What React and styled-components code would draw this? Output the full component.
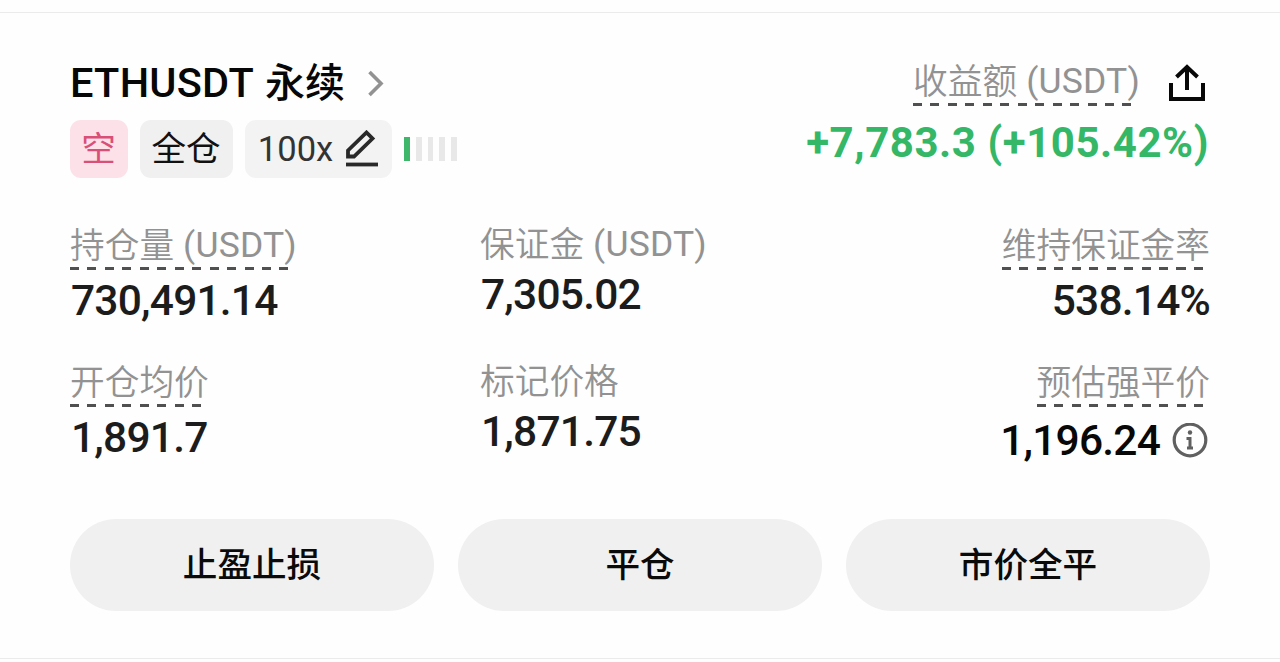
import React from "react";
import styled, { createGlobalStyle } from "styled-components";

const GlobalStyle = createGlobalStyle`
  * { box-sizing: border-box; }
  body {
    margin: 0;
    background: #fefefe;
    font-family: Roboto, "Noto Sans CJK SC", sans-serif;
    color: #1c1c1c;
  }
`;

const Page = styled.main`
  width: 1280px;
  height: 662px;
  padding-top: 12px;
  overflow: hidden;
`;

const Card = styled.section`
  height: 647px;
  padding: 47px 70px 0;
  border-top: 1px solid #ebebeb;
  border-bottom: 1px solid #ebebeb;
`;

const Header = styled.header`
  display: flex;
  justify-content: space-between;
  height: 118px;
`;

const Contract = styled.div`
  display: flex;
  flex-direction: column;
  gap: 14px;
`;

const TitleRow = styled.div`
  display: flex;
  align-items: center;
  height: 46px;
  gap: 22px;
`;

const Title = styled.h1`
  display: flex;
  gap: 11px;
  margin: 0;
  font-size: 40px;
  font-weight: 500;
  line-height: 47px;
  color: #070707;
  white-space: nowrap;
`;

const Pair = styled.span`
  font-size: 41.5px;
  line-height: 46px;
  letter-spacing: 0.25px;
`;

const TagRow = styled.div`
  display: flex;
  align-items: center;
  gap: 12px;
`;

const tones = {
  short: { background: "#fce1e8", color: "#d94f78" },
  plain: { background: "#f0f0f0", color: "#111" },
  soft: { background: "#f3f3f3", color: "#333" },
};

const Tag = styled.span`
  display: flex;
  align-items: center;
  justify-content: center;
  gap: 13px;
  width: ${(p) => p.$width}px;
  height: 58px;
  padding-right: 1px;
  border-radius: 11px;
  font-size: 34.6px;
  line-height: 58px;
  background: ${(p) => tones[p.$tone].background};
  color: ${(p) => tones[p.$tone].color};
`;

const RiskMeter = styled.div`
  display: flex;
  gap: 6px;
`;

const RiskBar = styled.i`
  width: 5.8px;
  height: 24px;
  background: ${(p) => (p.$on ? "#3fb76b" : "#e8e8e8")};
`;

const Profit = styled.div`
  display: flex;
  flex-direction: column;
  align-items: flex-end;
`;

const ProfitHead = styled.div`
  display: flex;
  align-items: flex-start;
  gap: 29px;
  height: 60px;
  padding: 3px 5px 0 0;

  svg {
    margin-top: 1px;
  }
`;

const ProfitValue = styled.strong`
  padding-right: 1px;
  font-size: 42px;
  font-weight: 700;
  line-height: 46px;
  letter-spacing: 0.55px;
  color: #34b766;
  white-space: nowrap;
`;

const Label = styled.span`
  display: flex;
  gap: 9px;
  height: ${(p) => (p.$dashed ? 43 : 38)}px;
  font-size: 34.7px;
  line-height: ${(p) => (p.$dashed ? 39 : 37)}px;
  font-weight: 350;
  color: #929292;
  white-space: nowrap;
  background: ${(p) =>
    p.$dashed
      ? "repeating-linear-gradient(90deg, #505050 0 9px, transparent 9px 17.45px) left bottom / calc(100% - 4px) 3px no-repeat"
      : "none"};
`;

const Unit = styled.span`
  font-size: 35.5px;
  line-height: ${(p) => (p.$raised ? 35 : 37)}px;
  font-weight: 400;
  letter-spacing: 0.2px;
`;

const Metrics = styled.div`
  display: grid;
  grid-template-columns: 410px 1fr auto;
  grid-auto-rows: 137px;
  margin-top: 49px;
`;

const Metric = styled.div`
  display: flex;
  flex-direction: column;
  align-items: ${(p) => (p.$end ? "flex-end" : "flex-start")};
`;

const Value = styled.div`
  display: flex;
  align-items: center;
  gap: 12px;
  margin-top: ${(p) => p.$gap}px;
  padding: 0 ${(p) => (p.$inset ? 2 : 0)}px 0 1px;
  font-size: 42.5px;
  font-weight: 500;
  letter-spacing: -0.8px;
  line-height: 46px;
  white-space: nowrap;
  color: ${(p) => (p.$inset ? "#080808" : "#1c1c1c")};
`;

const Actions = styled.div`
  display: grid;
  grid-template-columns: repeat(3, 1fr);
  gap: 24px;
  margin-top: 18px;
`;

const ActionButton = styled.button`
  height: 92px;
  padding: 0;
  border: 0;
  border-radius: 46px;
  background: #f0f0f0;
  color: #0a0a0a;
  font: 500 34.6px/92px Roboto, "Noto Sans CJK SC", sans-serif;
`;

const Chevron = () => (
  <svg width="18" height="28" viewBox="0 0 18 28" fill="none" stroke="#929292" strokeWidth="3.6">
    <path d="M2.5 3 14 14.5 2.5 26" />
  </svg>
);

const EditIcon = () => (
  <svg width="32" height="38" viewBox="0 0 32 38" fill="none" stroke="#292929" strokeWidth="3.8">
    <path d="M2 26.5V20.5L20.5 2.5 26.5 8.5 8 26.5Z" />
    <path d="M0 34.5H32" />
  </svg>
);

const ShareIcon = () => (
  <svg width="36" height="38" viewBox="0 0 36 38" fill="none" stroke="#080808" strokeWidth="4">
    <path d="M2 19V35H34V19M18 26V4M7.5 13 18 3 28.5 13" />
  </svg>
);

const InfoIcon = () => (
  <svg width="36" height="36" viewBox="0 0 36 36" fill="none" stroke="#606060" strokeWidth="3.2">
    <circle cx="18" cy="17" r="15.8" />
    <path d="M14.5 15.5H18V25.5M15 25H21" strokeWidth="3" />
    <circle cx="18" cy="9.5" r="2.2" fill="#606060" stroke="none" />
  </svg>
);

const metrics = [
  { label: "持仓量", unit: "(USDT)", value: "730,491.14", dashed: true },
  { label: "保证金", unit: "(USDT)", value: "7,305.02" },
  { label: "维持保证金率", value: "538.14%", dashed: true, end: true },
  { label: "开仓均价", value: "1,891.7", dashed: true },
  { label: "标记价格", value: "1,871.75" },
  { label: "预估强平价", value: "1,196.24", dashed: true, end: true, info: true },
];

export default function App() {
  return (
    <Page>
      <GlobalStyle />
      <Card>
        <Header>
          <Contract>
            <TitleRow>
              <Title>
                <Pair>ETHUSDT</Pair> 永续
              </Title>
              <Chevron />
            </TitleRow>
            <TagRow>
              <Tag $tone="short" $width={58}>空</Tag>
              <Tag $tone="plain" $width={93}>全仓</Tag>
              <Tag $tone="soft" $width={147}>
                100x
                <EditIcon />
              </Tag>
              <RiskMeter>
                {[true, false, false, false, false].map((on, i) => (
                  <RiskBar key={i} $on={on} />
                ))}
              </RiskMeter>
            </TagRow>
          </Contract>
          <Profit>
            <ProfitHead>
              <Label $dashed>
                收益额 <Unit>(USDT)</Unit>
              </Label>
              <ShareIcon />
            </ProfitHead>
            <ProfitValue>+7,783.3 (+105.42%)</ProfitValue>
          </Profit>
        </Header>
        <Metrics>
          {metrics.map((m) => (
            <Metric key={m.label} $end={m.end}>
              <Label $dashed={m.dashed}>
                {m.label}
                {m.unit && <Unit $raised={!m.dashed}>{m.unit}</Unit>}
              </Label>
              <Value $gap={m.info ? 11 : m.dashed ? 8 : 7} $inset={m.info}>
                {m.value}
                {m.info && <InfoIcon />}
              </Value>
            </Metric>
          ))}
        </Metrics>
        <Actions>
          <ActionButton>止盈止损</ActionButton>
          <ActionButton>平仓</ActionButton>
          <ActionButton>市价全平</ActionButton>
        </Actions>
      </Card>
    </Page>
  );
}
